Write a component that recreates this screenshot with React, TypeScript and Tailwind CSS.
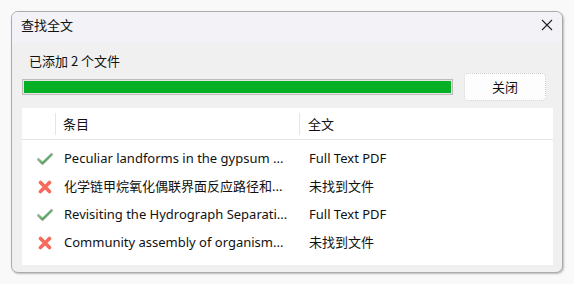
import React from "react";

const rows = [
  { ok: true, title: "Peculiar landforms in the gypsum ...", status: "Full Text PDF" },
  { ok: false, title: "化学链甲烷氧化偶联界面反应路径和...", status: "未找到文件" },
  { ok: true, title: "Revisiting the Hydrograph Separati...", status: "Full Text PDF" },
  { ok: false, title: "Community assembly of organism...", status: "未找到文件" },
];

function CheckIcon() {
  return (
    <svg width="16" height="14" viewBox="0 0 16 14">
      <defs>
        <linearGradient id="ck" x1="0" y1="0" x2="1" y2="1">
          <stop offset="0" stopColor="#b5dfb1" />
          <stop offset="0.6" stopColor="#4cb556" />
          <stop offset="1" stopColor="#2f9140" />
        </linearGradient>
      </defs>
      <path d="M1.5 7.5 L5.5 11.5 L14.5 2.5" fill="none" stroke="#9a9a9a" strokeWidth="2.6" strokeLinecap="round" strokeLinejoin="round" />
      <path d="M1.8 7.5 L5.5 11 L14.2 2.8" fill="none" stroke="url(#ck)" strokeWidth="1.6" strokeLinecap="round" strokeLinejoin="round" />
    </svg>
  );
}

function CrossIcon() {
  return (
    <svg width="14" height="14" viewBox="0 0 14 14">
      <path d="M2.5 2.5 L11.5 11.5 M11.5 2.5 L2.5 11.5" fill="none" stroke="#f56a5a" strokeWidth="3.6" strokeLinecap="round" />
    </svg>
  );
}

export default function App() {
  return (
    <div
      className="w-[574px] h-[284px] bg-[#f9f9f9] pl-[11px] pt-[11px]"
      style={{ fontFamily: '"Noto Sans", "Noto Sans CJK SC", sans-serif' }}
    >
      <div className="w-[552px] h-[262px] flex flex-col border border-[#ababab] rounded-[7px] overflow-hidden bg-[#f0f0f0] shadow-[1px_1px_2px_rgba(0,0,0,0.25)]">
        {/* title bar */}
        <div className="h-[30px] shrink-0 bg-[#f2f2f7] flex items-start justify-between pl-[9px] pr-[9px] pt-[3px]">
          <span className="text-[13px] leading-[20px] text-[#111]" style={{ fontFamily: '"Noto Sans CJK SC", sans-serif' }}>查找全文</span>
          <svg width="12" height="12" viewBox="0 0 12 12" className="mt-[4px]">
            <path d="M1 1 L11 11 M11 1 L1 11" stroke="#222" strokeWidth="1.1" />
          </svg>
        </div>

        <div className="flex-1 flex flex-col pl-[10px] pr-[9px] pb-[7px]">
          <div className="h-[31px] pt-[9px] pl-[7px] text-[13px] text-[#111] leading-[20px]" style={{ fontFamily: '"Noto Sans CJK SC", sans-serif' }}>
            已添加 2 个文件
          </div>

          <div className="flex items-center h-[28px] mb-[7px]">
            <div className="w-[431px] h-[16px] border border-[#bcbcbc] bg-[#e6e6e6] p-[1px]">
              <div className="w-full h-full bg-[#06b025]" />
            </div>
            <div className="ml-[11px] w-[82px] h-[28px] rounded-[4px] bg-[#fdfdfd] border border-dotted border-[#cfcfcf] flex items-center justify-center text-[13px] text-[#111]" style={{ fontFamily: '"Noto Sans CJK SC", sans-serif' }}>
              关闭
            </div>
          </div>

          <div className="flex-1 bg-white flex flex-col">
            <div className="h-[32px] flex items-center border-b border-[#e5e5e5] text-[13px] text-[#111]" style={{ fontFamily: '"Noto Sans CJK SC", sans-serif' }}>
              <div className="w-[34px] h-[22px] border-r border-[#e5e5e5]" />
              <div className="w-[244px] h-[22px] border-r border-[#e5e5e5] pl-[7px] leading-[22px]">条目</div>
              <div className="pl-[8px] leading-[22px]">全文</div>
            </div>
            <div className="pt-[5px]">
              {rows.map((r, i) => (
                <div key={i} className="h-[28px] flex items-center text-[13px] text-[#111]">
                  <div className="w-[34px] flex items-center justify-center pl-[12px]">
                    {r.ok ? <CheckIcon /> : <CrossIcon />}
                  </div>
                  <div className="w-[245px] pl-[8px] whitespace-nowrap overflow-hidden">{r.title}</div>
                  <div className="pl-[8px]">{r.status}</div>
                </div>
              ))}
            </div>
          </div>
        </div>
      </div>
    </div>
  );
}
